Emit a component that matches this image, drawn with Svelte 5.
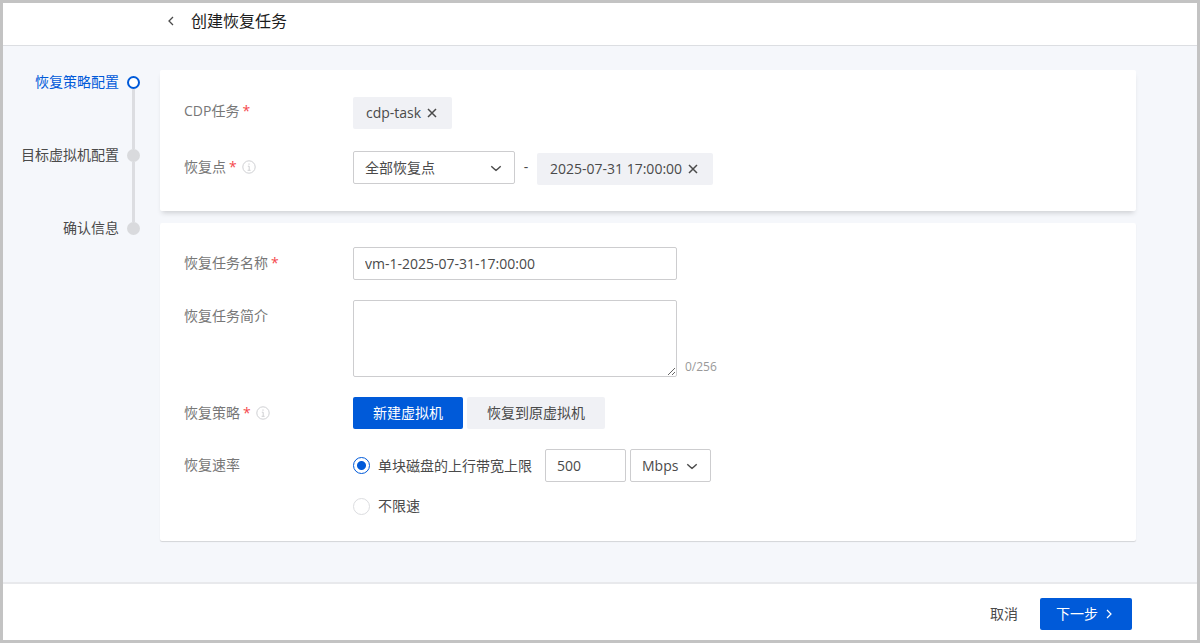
<script>
    const steps = ['恢复策略配置', '目标虚拟机配置', '确认信息'];
    const strategies = ['新建虚拟机', '恢复到原虚拟机'];
    const maxLength = 256;

    let currentStep = 0;
    let task = 'cdp-task';
    let pointRange = 'all';
    let point = '2025-07-31 17:00:00';
    let name = 'vm-1-2025-07-31-17:00:00';
    let description = '';
    let strategy = 0;
    let rateMode = 'limit';
    let rate = '500';
    let unit = 'Mbps';
</script>

{#snippet chevron()}
    <svg class="chevron" viewBox="0 0 12 12" aria-hidden="true">
        <path d="M1.3 4.2Q4.6 7.4 6 8.3Q7.4 7.4 10.7 4.2" />
    </svg>
{/snippet}

{#snippet info()}
    <svg class="info" viewBox="0 0 14 14" aria-hidden="true">
        <circle cx="7" cy="7" r="6.2" />
        <path d="M7 3.4v1.4M5.8 6.2H7.2v4M5.6 10.3h3" />
    </svg>
{/snippet}

{#snippet cross()}
    <svg viewBox="0 0 10 10" aria-hidden="true"><path d="M1 1l8 8M9 1l-8 8" /></svg>
{/snippet}

<div class="page">
    <header>
        <button class="back" aria-label="返回">
            <svg viewBox="0 0 6 10" aria-hidden="true"><path d="M5 1L1 5l4 4" /></svg>
        </button>
        <h1>创建恢复任务</h1>
    </header>

    <main>
        <ol class="steps">
            {#each steps as step, i}
                <li class:active={i === currentStep}>
                    <span>{step}</span>
                    <i class="dot"></i>
                </li>
            {/each}
        </ol>

        <form class="cards" id="restore-form" on:submit|preventDefault>
            <section class="card source">
                <div class="row">
                    <span class="label">CDP任务<em>*</em></span>
                    {#if task}
                        <span class="tag">
                            {task}
                            <button type="button" aria-label="移除任务" on:click={() => task = ''}>{@render cross()}</button>
                        </span>
                    {/if}
                </div>
                <div class="row">
                    <label class="label" for="range">恢复点<em>*</em>{@render info()}</label>
                    <div class="select range">
                        <select id="range" bind:value={pointRange}>
                            <option value="all">全部恢复点</option>
                        </select>
                        {@render chevron()}
                    </div>
                    <span class="dash">-</span>
                    {#if point}
                        <span class="tag">
                            {point}
                            <button type="button" aria-label="移除恢复点" on:click={() => point = ''}>{@render cross()}</button>
                        </span>
                    {/if}
                </div>
            </section>

            <section class="card settings">
                <div class="row">
                    <label class="label" for="name">恢复任务名称<em>*</em></label>
                    <input class="field wide" id="name" type="text" bind:value={name} />
                </div>
                <div class="row">
                    <label class="label" for="description">恢复任务简介</label>
                    <textarea class="field wide" id="description" maxlength={maxLength} bind:value={description}></textarea>
                    <span class="counter">{description.length}/{maxLength}</span>
                </div>
                <div class="row">
                    <span class="label">恢复策略<em>*</em>{@render info()}</span>
                    <div class="switch">
                        {#each strategies as item, i}
                            <button type="button" class:selected={strategy === i} on:click={() => strategy = i}>{item}</button>
                        {/each}
                    </div>
                </div>
                <div class="row">
                    <span class="label">恢复速率</span>
                    <div class="rates">
                        <div class="rate">
                            <label class="radio">
                                <input type="radio" value="limit" bind:group={rateMode} />
                                单块磁盘的上行带宽上限
                            </label>
                            <input class="field short" type="text" aria-label="带宽上限" bind:value={rate} />
                            <div class="select short">
                                <select aria-label="单位" bind:value={unit}>
                                    <option>Mbps</option>
                                </select>
                                {@render chevron()}
                            </div>
                        </div>
                        <div class="rate">
                            <label class="radio">
                                <input type="radio" value="unlimited" bind:group={rateMode} />
                                不限速
                            </label>
                        </div>
                    </div>
                </div>
            </section>
        </form>
    </main>

    <footer>
        <button class="cancel">取消</button>
        <button class="next" form="restore-form">
            下一步
            <svg viewBox="0 0 6 10" aria-hidden="true"><path d="M1 1l4 4-4 4" /></svg>
        </button>
    </footer>
</div>

<style>
    :global(body) {
        margin: 0;
    }

    .page {
        box-sizing: border-box;
        min-height: 100vh;
        display: flex;
        flex-direction: column;
        border: 3px solid #c3c3c3;
        background: #f5f7fb;
        color: #4a4a4a;
        font-family: "Open Sans", "Noto Sans CJK SC", sans-serif;
        font-size: 14px;
        line-height: 32px;
    }

    button,
    input,
    select,
    textarea {
        box-sizing: border-box;
        margin: 0;
        font: inherit;
        color: inherit;
    }

    button {
        padding: 0;
        border: none;
        border-radius: 2px;
        background: none;
        cursor: pointer;
    }

    svg {
        flex: none;
        fill: none;
        stroke: currentColor;
    }

    header {
        display: flex;
        align-items: center;
        gap: 17px;
        padding: 0 61px 6px 165px;
        background: #fff;
        border-bottom: 1px solid #dcdee2;
    }

    .back {
        display: flex;
    }

    .back svg {
        width: 6px;
        height: 10px;
        stroke-width: 1.3;
    }

    h1 {
        margin: 0;
        color: #1c1c1c;
        font-size: 16px;
        font-weight: 400;
        line-height: 36px;
    }

    main {
        flex: 1;
        display: flex;
        align-items: flex-start;
        gap: 20px;
        padding: 24px 61px 24px 0;
    }

    .steps {
        box-sizing: border-box;
        flex: none;
        width: 137px;
        margin: 0;
        padding: 0;
        list-style: none;
    }

    .steps li {
        position: relative;
        display: flex;
        align-items: center;
        justify-content: flex-end;
        gap: 8px;
        height: 24px;
        margin-bottom: 49px;
        line-height: 24px;
    }

    .steps li:not(:last-child)::after {
        content: '';
        position: absolute;
        top: 19px;
        right: 5px;
        width: 3px;
        height: 60px;
        background: #dcdde1;
    }

    .dot {
        box-sizing: border-box;
        width: 13px;
        height: 13px;
        border-radius: 50%;
        background: #d9dadd;
    }

    .active {
        color: #005ad9;
    }

    .active .dot {
        border: 2px solid #005ad9;
        background: #fff;
    }

    .cards {
        flex: 1;
        display: flex;
        flex-direction: column;
        gap: 12px;
    }

    .card {
        display: flex;
        flex-direction: column;
        gap: 20px;
        background: #fff;
        border-radius: 2px;
    }

    .source {
        padding: 25px 24px 24px;
        box-shadow: 0 4px 5px -2px rgba(0, 0, 0, 0.16);
    }

    .settings {
        padding: 24px 24px 19px;
        box-shadow: 0 1px 1px rgba(0, 0, 0, 0.14);
    }

    .row {
        display: flex;
        align-items: flex-start;
    }

    .label {
        flex: none;
        display: flex;
        align-items: center;
        width: 169px;
        height: 32px;
        color: #777;
    }

    .label em {
        margin-left: 3px;
        color: #f5484d;
        font-style: normal;
    }

    .info {
        width: 14px;
        height: 14px;
        margin-left: 5px;
        stroke: #cfd0d3;
    }

    .tag {
        display: flex;
        align-items: center;
        gap: 6px;
        margin: 2px 0;
        padding: 0 15px 0 13px;
        border-radius: 2px;
        background: #f0f1f5;
    }

    .tag button {
        display: flex;
    }

    .tag svg {
        width: 10px;
        height: 10px;
        stroke-width: 1.5;
    }

    .dash {
        width: 22px;
        text-align: center;
    }

    .field,
    select {
        height: 33px;
        padding: 0 11px;
        border: 1px solid #cdcdcf;
        border-radius: 2px;
        background: #fff;
        outline: none;
    }

    .wide {
        width: 324px;
    }

    textarea.wide {
        height: 77px;
        padding: 6px 11px;
        line-height: 20px;
    }

    .select {
        position: relative;
        display: flex;
    }

    select {
        width: 100%;
        appearance: none;
    }

    .range {
        width: 162px;
    }

    .short {
        width: 81px;
    }

    .chevron {
        position: absolute;
        top: 11px;
        right: 13px;
        width: 12px;
        height: 12px;
        stroke-width: 1.4;
        pointer-events: none;
    }

    .counter {
        align-self: flex-end;
        margin-left: 8px;
        color: #999;
        font-size: 12px;
        line-height: 20px;
    }

    .switch {
        display: flex;
        gap: 4px;
    }

    .switch button {
        height: 32px;
        padding: 0 20px;
        background: #f0f1f5;
    }

    .switch .selected {
        background: #005ad9;
        color: #fff;
    }

    .rates {
        display: flex;
        flex-direction: column;
        gap: 8px;
    }

    .rate {
        display: flex;
        align-items: center;
        gap: 4px;
    }

    .radio {
        display: flex;
        align-items: center;
        gap: 8px;
        margin-right: 9px;
    }

    .radio input {
        width: 17px;
        height: 17px;
        appearance: none;
        border: 1px solid #dcdde0;
        border-radius: 50%;
        background: #fff;
    }

    .radio input:checked {
        border-color: #005ad9;
        background: radial-gradient(circle, #005ad9 4px, #fff 5px);
    }

    footer {
        display: flex;
        align-items: center;
        justify-content: flex-end;
        gap: 22px;
        padding: 14px 65px 10px;
        background: #fff;
        border-top: 2px solid #e8e9ec;
    }

    .next {
        display: flex;
        align-items: center;
        gap: 8px;
        height: 32px;
        padding: 0 20px 0 16px;
        background: #005ad9;
        color: #fff;
    }

    .next svg {
        width: 6px;
        height: 10px;
        stroke-width: 1.2;
    }
</style>
